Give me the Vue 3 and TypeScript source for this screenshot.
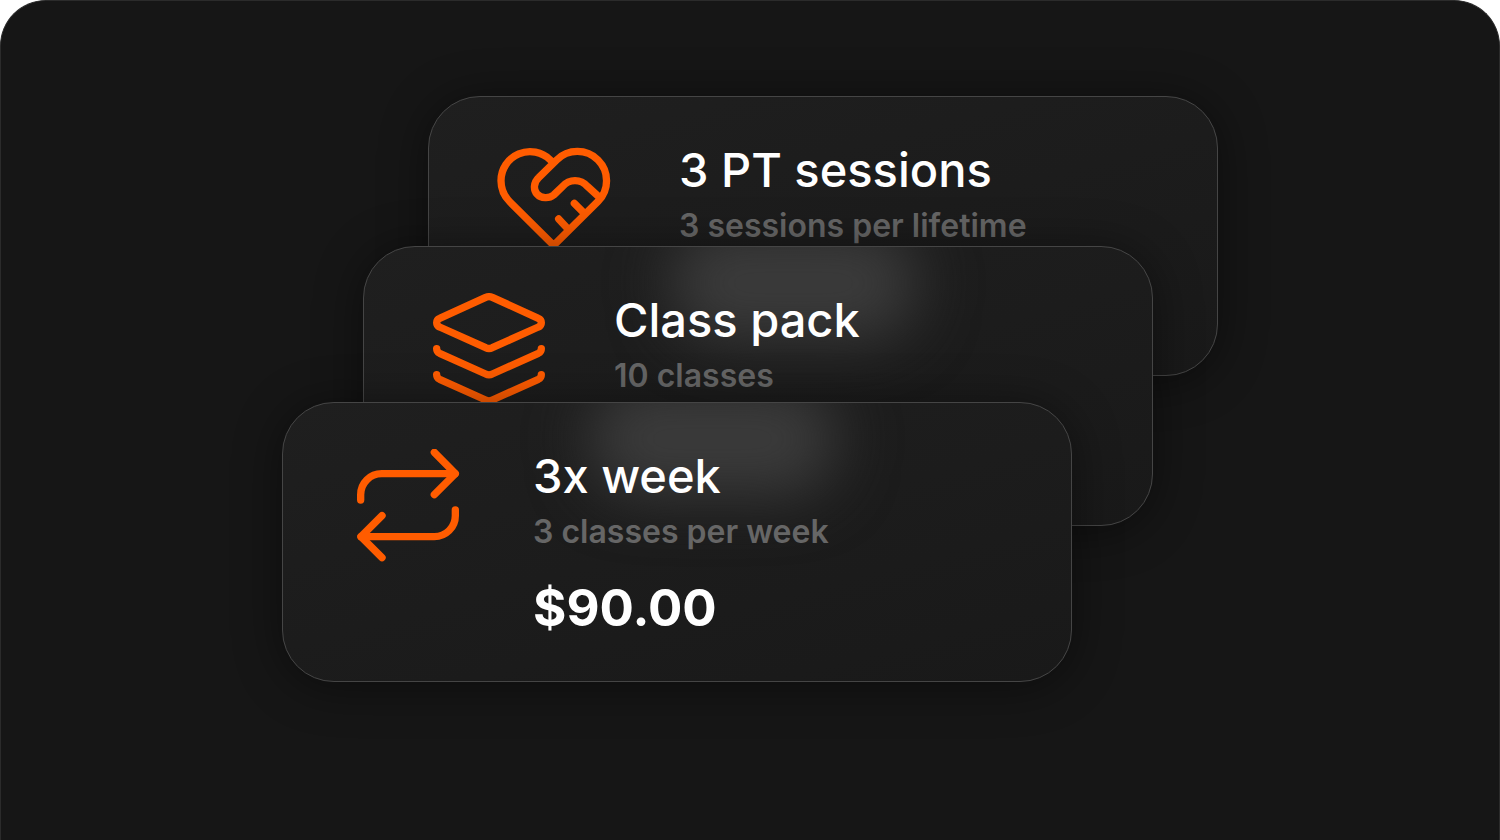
<script setup lang="ts">
interface Plan {
  id: string
  title: string
  detail: string
  price: string
  icon: string[]
}

const plans: Plan[] = [
  {
    id: 'sessions',
    title: '3 PT sessions',
    detail: '3 sessions per lifetime',
    price: '',
    icon: [
      'M217 96L211 90A87 87 0 0 0 63 152C63 178 74 200 90 216L221 346L354 214A87 87 0 1 0 230 90L176 143C160 158 160 180 171 192C183 206 208 206 221 195L248 169C268 146 302 146 322 169L354 198',
      'M283 220L313 250',
      'M236 267L264 297',
    ],
  },
  {
    id: 'pack',
    title: 'Class pack',
    detail: '10 classes',
    price: '',
    icon: [
      'M212 52Q222 48 232 52L370 115C382 120 382 136 370 141L232 203Q222 208 212 203L74 141C62 136 62 120 74 115Z',
      'M65 206C65 213 68 217 74 220L212 282Q222 287 232 282L370 220C376 217 379 213 379 206',
      'M65 284C65 291 68 295 74 298L212 360Q222 365 232 360L370 298C376 295 379 291 379 284',
    ],
  },
  {
    id: 'week',
    title: '3x week',
    detail: '3 classes per week',
    price: '$90.00',
    icon: [
      'M80 192V176A63 63 0 0 1 143 113H363',
      'M301 49L364 113L301 176',
      'M364 222V239A63 63 0 0 1 301 302H81',
      'M144 239L81 302L144 365',
    ],
  },
]
</script>

<template>
  <main class="stage">
    <section class="stack" aria-label="Plans">
      <article v-for="plan in plans" :key="plan.id" class="card" :class="plan.id">
        <svg class="icon" viewBox="45 39 360 342" aria-hidden="true">
          <path v-for="d in plan.icon" :key="d" :d="d" />
        </svg>
        <div class="copy">
          <h2 class="title">{{ plan.title }}</h2>
          <p class="detail">{{ plan.detail }}</p>
          <p v-if="plan.price" class="price">{{ plan.price }}</p>
        </div>
      </article>
    </section>
  </main>
</template>

<style>
body {
  background: #fff;
}
</style>

<style scoped>
.stage {
  box-sizing: border-box;
  min-height: 100vh;
  padding: 95px 24px;
  display: flex;
  justify-content: center;
  align-items: flex-start;
  border: 1px solid #2b2b2b;
  border-bottom: 0;
  border-radius: 46px 46px 0 0;
  background: #161616;
  font-family: Inter, "Liberation Sans", sans-serif;
}
.stack {
  width: 100%;
  max-width: 936px;
  display: flex;
  flex-direction: column;
}
.card {
  position: relative;
  overflow: hidden;
  box-sizing: border-box;
  width: 100%;
  max-width: 790px;
  min-height: 280px;
  padding: 41px 66px 39px;
  display: flex;
  gap: 64px;
  align-items: flex-start;
  border: 1px solid #454545;
  border-radius: 52px;
  background: linear-gradient(165deg, #1f1f1f, #191919);
  box-shadow: 0 4px 48px rgba(0, 0, 0, 0.45);
}
.sessions {
  align-self: flex-end;
}
.pack {
  margin: -130px 0 0 81px;
}
.week {
  margin-top: -124px;
}
.pack::before,
.week::before {
  content: "";
  position: absolute;
  top: -20px;
  left: 39%;
  width: 31%;
  height: 112px;
  border-radius: 48px;
  background: #3b3b3b;
  filter: blur(30px);
}
.icon {
  position: relative;
  flex: none;
  width: 120px;
  height: 114px;
  margin-top: 5px;
  fill: none;
  stroke: #ff5c00;
  stroke-width: 22;
  stroke-linecap: round;
  stroke-linejoin: round;
}
.copy {
  position: relative;
  color: #fff;
}
.title,
.detail,
.price {
  margin: 0;
  white-space: nowrap;
}
.title {
  font-size: 47px;
  line-height: 64px;
  font-weight: 500;
}
.detail {
  margin-top: 4px;
  font-size: 32px;
  line-height: 40px;
  font-weight: 600;
  color: #666;
}
.price {
  margin-top: 24px;
  font-size: 51px;
  line-height: 64px;
  font-weight: 700;
}
</style>
